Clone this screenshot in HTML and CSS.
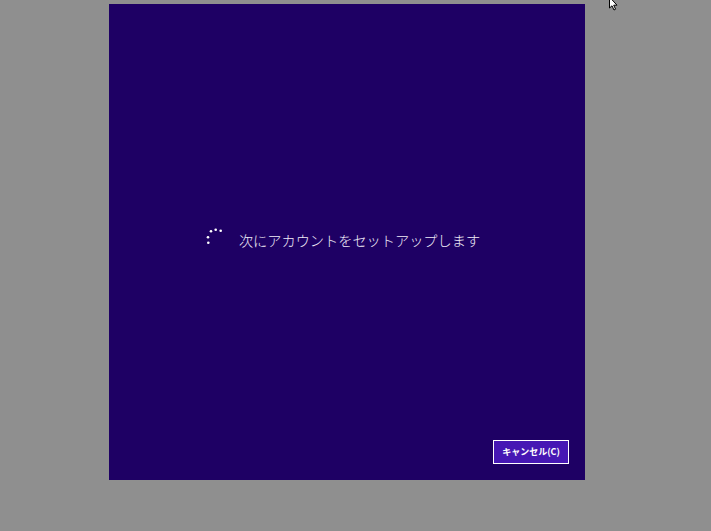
FILE: index.html
```html
<!DOCTYPE html>
<html lang="ja">
<head>
<meta charset="utf-8">
<link rel="stylesheet" href="styles.css">
</head>
<body>
<div class="panel">
  <div class="message">
    <svg class="spinner" width="18" height="17" viewBox="0 0 18 17">
      <circle cx="2.3" cy="14.7" r="1.3"/>
      <circle cx="2" cy="9.3" r="1.3"/>
      <circle cx="5" cy="3.3" r="1.3"/>
      <circle cx="9.7" cy="1.7" r="1.3"/>
      <circle cx="14.7" cy="2.7" r="1.3"/>
    </svg>
    <span class="text">次にアカウントをセットアップします</span>
  </div>
  <div class="footer">
    <button class="cancel">キャンセル(C)</button>
  </div>
</div>
<svg class="cursor" width="12" height="14" viewBox="0 0 12 14">
  <path d="M1.5 -3 L1.5 8 L4 5.8 L6 10 L7.6 9.2 L5.7 5.2 L9 5.2 Z" fill="#fff" stroke="#000" stroke-width="1"/>
</svg>
</body>
</html>
```
FILE: styles.css
```css
html, body {
  margin: 0;
  padding: 0;
  height: 100%;
  background: #8f8f8f;
  overflow: hidden;
}
body {
  padding: 4px 0 0 109px;
  box-sizing: border-box;
  font-family: "Noto Sans CJK JP", "Noto Sans", sans-serif;
}
.panel {
  width: 476px;
  height: 476px;
  background: #1e0064;
  display: flex;
  flex-direction: column;
  box-sizing: border-box;
  padding: 0 16px 16px 16px;
}
.message {
  flex: 1;
  display: flex;
  align-items: center;
  justify-content: center;
  padding-top: 36px;
  padding-right: 8px;
  gap: 15px;
}
.spinner {
  fill: #ffffff;
  margin-top: -8px;
}
.text {
  color: #f0ecf8;
  font-size: 14.2px;
  font-weight: 300;
  line-height: 20px;
}
.footer {
  display: flex;
  justify-content: flex-end;
}
.cancel {
  width: 76px;
  height: 24px;
  margin: 0;
  padding: 0;
  border: 1px solid #ffffff;
  background: #4617b4;
  color: #ffffff;
  font-family: "Noto Sans CJK JP", sans-serif;
  font-size: 9px;
  font-weight: 700;
  line-height: 22px;
}
.cursor {
  position: absolute;
  left: 608px;
  top: 0;
}
```
